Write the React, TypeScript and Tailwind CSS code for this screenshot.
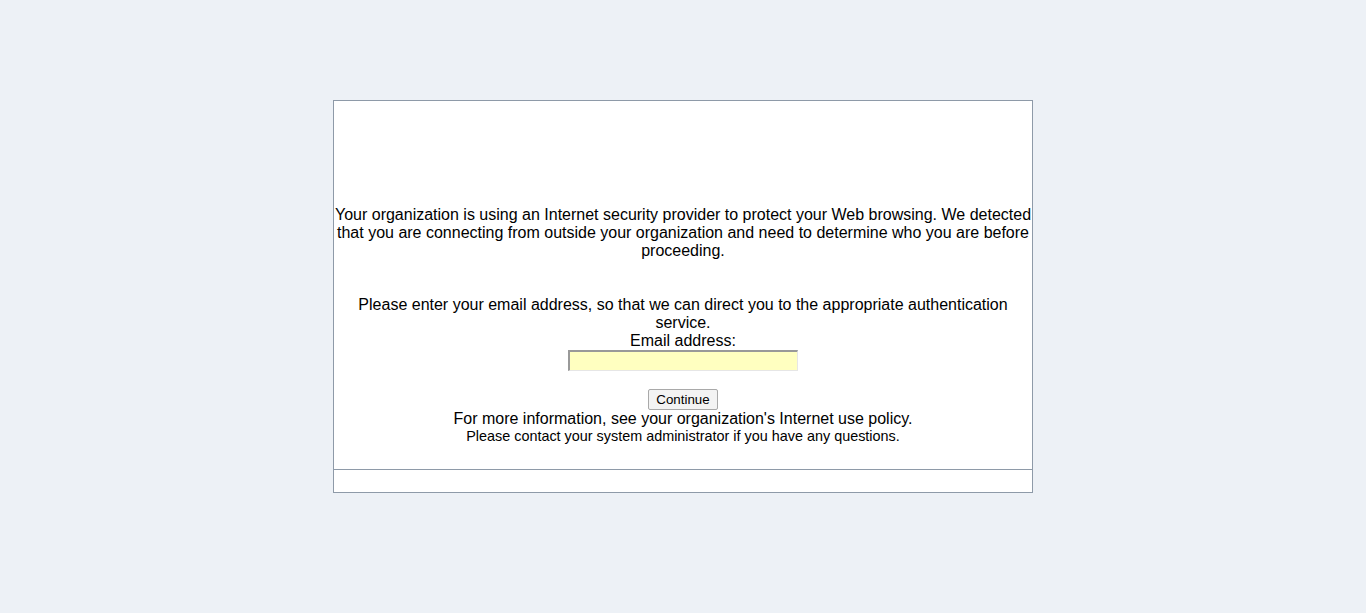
export default function App() {
  return (
    <div className="min-h-[613px] bg-[#edf1f6] pt-[100px] font-['Liberation_Sans',Arial,sans-serif] text-black">
      <div className="mx-auto w-[700px] border border-[#8e9aa8] bg-white">
        {/* main message */}
        <div className="flex flex-col items-center pt-[105px] pb-[24px] text-center text-[16px] leading-[18px]">
          <p>
            Your organization is using an Internet security provider to protect your Web browsing. We detected
            that you are connecting from outside your organization and need to determine who you are before
            proceeding.
          </p>
          <p className="mt-[36px] px-[20px]">
            Please enter your email address, so that we can direct you to the appropriate authentication service.
          </p>
          <label htmlFor="email">Email address:</label>
          <input
            id="email"
            type="text"
            className="h-[21px] w-[230px] border-t-2 border-l-2 border-r border-b border-t-[#999999] border-l-[#999999] border-r-[#e6e6e6] border-b-[#e6e6e6] bg-[#ffffc0] px-1 text-[13px] outline-none"
          />
          <button
            type="button"
            className="mt-[18px] h-[21px] rounded-[2px] border border-[#a9a9a9] bg-[#f3f3f3] px-[7px] text-[13.33px] leading-[17px]"
          >
            Continue
          </button>
          <p>For more information, see your organization's Internet use policy.</p>
          <p className="text-[14.4px] leading-[17px]">Please contact your system administrator if you have any questions.</p>
        </div>
        {/* footer strip */}
        <div className="h-[23px] border-t border-[#8e9aa8]" />
      </div>
    </div>
  );
}
